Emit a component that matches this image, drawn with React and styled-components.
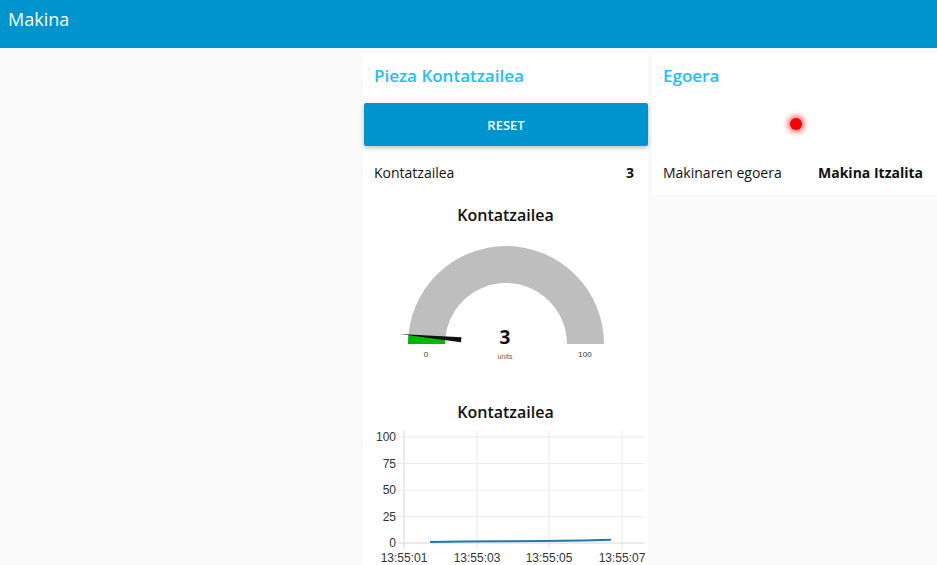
import React from 'react';
import styled, { createGlobalStyle } from 'styled-components';

const GlobalStyle = createGlobalStyle`
  html, body {
    margin: 0;
    padding: 0;
    overflow: hidden;
    background: #fafafa;
    font-family: "Open Sans", "DejaVu Sans", sans-serif;
  }
`;

const Header = styled.header`
  height: 48px;
  background: #0094ce;
  color: #fff;
  display: flex;
  align-items: flex-start;
  padding: 7px 8px 0;
  box-sizing: border-box;
  font-size: 18px;
`;

const Main = styled.main`
  display: flex;
  justify-content: flex-end;
  align-items: flex-start;
  gap: 4px;
  padding-top: 6px;
`;

const Card = styled.section`
  width: 285px;
  background: #fff;
  display: flex;
  flex-direction: column;
  padding-bottom: ${p => p.$pad || 0}px;
`;

const CardTitle = styled.h2`
  margin: 0;
  height: 49px;
  display: flex;
  align-items: center;
  padding: 0 0 6px 11px;
  box-sizing: border-box;
  font-size: 17px;
  font-weight: 600;
  color: #1bbfff;
`;

const Button = styled.button`
  height: 43px;
  margin: 0 0 4px 1px;
  width: 284px;
  border: none;
  border-radius: 2px;
  background: #0094ce;
  color: #fff;
  font-family: inherit;
  font-size: 13px;
  font-weight: 600;
  box-shadow: 0 2px 5px rgba(0, 0, 0, 0.26);
`;

const Row = styled.div`
  height: 44px;
  display: flex;
  align-items: center;
  justify-content: space-between;
  padding: 0 14px 0 11px;
  font-size: 14px;
  color: #111;
`;

const Value = styled.b`
  font-weight: 700;
`;

const LedBox = styled.div`
  height: 43px;
  margin-bottom: 4px;
  display: flex;
  align-items: center;
  justify-content: center;
`;

const Led = styled.span`
  width: 12px;
  height: 12px;
  margin-left: 2px;
  margin-top: -2px;
  border-radius: 50%;
  background: ${p => p.$color};
  box-shadow: 0 0 6px 2px ${p => p.$color}aa;
`;

const WidgetTitle = styled.div`
  height: ${p => p.$h}px;
  margin-top: ${p => p.$mt || 0}px;
  display: flex;
  align-items: center;
  justify-content: center;
  font-size: 16px;
  font-weight: 600;
  color: #111;
`;

const Plot = styled.svg`
  display: block;
  overflow: visible;
`;

const Gauge = ({ value, min, max }) => {
  const cx = 143, cy = 108, R = 98, r = 61;
  const a = Math.PI * (1 - (value - min) / (max - min));
  const pt = (rad) => [cx + rad * Math.cos(a), cy - rad * Math.sin(a)];
  const [ox, oy] = pt(R);
  const [ix, iy] = pt(r);
  const tip = pt(107);
  const base = pt(45);
  const px = Math.sin(a), py = Math.cos(a);
  return (
    <Plot width="285" height="150">
      <path d={`M${cx - R} ${cy} A${R} ${R} 0 0 1 ${cx + R} ${cy} L${cx + r} ${cy} A${r} ${r} 0 0 0 ${cx - r} ${cy} Z`} fill="#bebebe" />
      <path d={`M${cx - R} ${cy} A${R} ${R} 0 0 1 ${ox} ${oy} L${ix} ${iy} A${r} ${r} 0 0 0 ${cx - r} ${cy} Z`} fill="#00b800" />
      <polygon
        points={`${tip[0]},${tip[1]} ${base[0] + px * 2.5},${base[1] + py * 2.5} ${base[0] - px * 2.5},${base[1] - py * 2.5}`}
        fill="#111"
      />
      <text x={cx - 1} y={cy} textAnchor="middle" fontFamily="Open Sans, sans-serif" fontWeight="700" fontSize="19" fill="#111">{value}</text>
      <text x={cx - 1} y={cy + 15} textAnchor="middle" fontFamily="Liberation Sans, sans-serif" fontSize="7" fill="#8a5a00">units</text>
      <text x={cx - 80} y={cy + 13} textAnchor="middle" fontFamily="Liberation Sans, sans-serif" fontSize="8" fill="#333">{min}</text>
      <text x={cx + 79} y={cy + 13} textAnchor="middle" fontFamily="Liberation Sans, sans-serif" fontSize="8" fill="#333">{max}</text>
    </Plot>
  );
};

const yTicks = [100, 75, 50, 25, 0];
const xTicks = [
  { x: 41, label: '13:55:01' },
  { x: 114, label: '13:55:03' },
  { x: 186, label: '13:55:05' },
  { x: 259, label: '13:55:07' },
];
const series = [[67, 1], [100, 1.3], [140, 1.6], [180, 2], [220, 2.4], [248, 3]];

const LineChart = () => {
  const top = 5, bottom = 111, left = 41, right = 281;
  const y = (v) => bottom - (v / 100) * (bottom - top);
  return (
    <Plot width="285" height="140" fontFamily="Liberation Sans, Arial, sans-serif" fontSize="12">
      {xTicks.map(t => (
        <line key={t.label} x1={t.x} x2={t.x} y1={top - 6} y2={bottom + 6} stroke={t.x === left ? '#d6d6d6' : '#e8e8e8'} />
      ))}
      {yTicks.map(v => (
        <g key={v}>
          <line x1={left - 6} x2={right} y1={y(v)} y2={y(v)} stroke={v === 0 ? '#d6d6d6' : '#ebebeb'} />
          <text x={left - 8} y={y(v) + 4} textAnchor="end" fill="#333">{v}</text>
        </g>
      ))}
      {xTicks.map(t => (
        <text key={t.label} x={t.x} y={bottom + 19} textAnchor="middle" fill="#333">{t.label}</text>
      ))}
      <polyline
        points={series.map(([px, v]) => `${px},${y(v)}`).join(' ')}
        fill="none"
        stroke="#1f77b4"
        strokeWidth="2"
      />
    </Plot>
  );
};

export default function App() {
  return (
    <>
      <GlobalStyle />
      <Header>Makina</Header>
      <Main>
        <Card>
          <CardTitle>Pieza Kontatzailea</CardTitle>
          <Button>RESET</Button>
          <Row>
            <span>Kontatzailea</span>
            <Value>3</Value>
          </Row>
          <WidgetTitle $h={42}>Kontatzailea</WidgetTitle>
          <Gauge value={3} min={0} max={100} />
          <WidgetTitle $h={40} $mt={6}>Kontatzailea</WidgetTitle>
          <LineChart />
        </Card>
        <Card $pad={1}>
          <CardTitle>Egoera</CardTitle>
          <LedBox>
            <Led $color="#ff0000" />
          </LedBox>
          <Row>
            <span>Makinaren egoera</span>
            <Value>Makina Itzalita</Value>
          </Row>
        </Card>
      </Main>
    </>
  );
}
